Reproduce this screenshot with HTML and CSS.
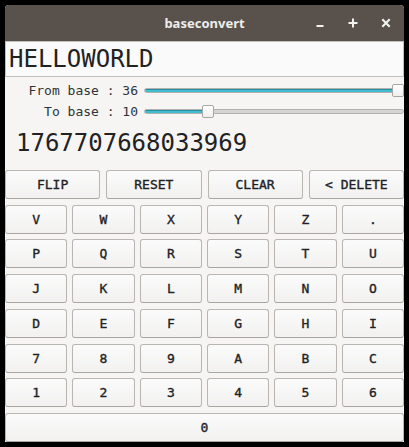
FILE: index.html
```
<!DOCTYPE html>
<html>
<head>
<meta charset="utf-8">
<link rel="stylesheet" href="styles.css">
</head>
<body>
<div class="window">
  <div class="titlebar">
    <div class="tb-side"></div>
    <div class="title">baseconvert</div>
    <div class="tb-side controls">
      <span class="ctl"><svg width="10" height="10" viewBox="0 0 10 10"><rect x="1.5" y="7" width="7" height="2" fill="#f2f2f0"/></svg></span>
      <span class="ctl"><svg width="10" height="10" viewBox="0 0 10 10"><rect x="4" y="0.5" width="2" height="9" fill="#f2f2f0"/><rect x="0.5" y="4" width="9" height="2" fill="#f2f2f0"/></svg></span>
      <span class="ctl"><svg width="10" height="10" viewBox="0 0 10 10"><path d="M1.3 1.3 L8.7 8.7 M8.7 1.3 L1.3 8.7" stroke="#f2f2f0" stroke-width="2.1"/></svg></span>
    </div>
  </div>
  <div class="entry">HELLOWORLD</div>
  <div class="sliders">
    <div class="label">From base : 36</div>
    <div class="slider"><div class="track"><div class="fill" style="width:100%"></div></div><div class="thumb" style="left:calc((100% - 12px) * 1)"></div></div>
    <div class="label">To base : 10</div>
    <div class="slider"><div class="track"><div class="fill" style="width:23.5%"></div></div><div class="thumb" style="left:calc((100% - 12px) * 0.235)"></div></div>
  </div>
  <div class="output">1767707668033969</div>
  <div class="keys">
    <div class="row r4"><button class="key">FLIP</button><button class="key">RESET</button><button class="key">CLEAR</button><button class="key">&lt; DELETE</button></div>
    <div class="row r6"><button class="key">V</button><button class="key">W</button><button class="key">X</button><button class="key">Y</button><button class="key">Z</button><button class="key">.</button></div>
    <div class="row r6"><button class="key">P</button><button class="key">Q</button><button class="key">R</button><button class="key">S</button><button class="key">T</button><button class="key">U</button></div>
    <div class="row r6"><button class="key">J</button><button class="key">K</button><button class="key">L</button><button class="key">M</button><button class="key">N</button><button class="key">O</button></div>
    <div class="row r6"><button class="key">D</button><button class="key">E</button><button class="key">F</button><button class="key">G</button><button class="key">H</button><button class="key">I</button></div>
    <div class="row r6"><button class="key">7</button><button class="key">8</button><button class="key">9</button><button class="key">A</button><button class="key">B</button><button class="key">C</button></div>
    <div class="row r6"><button class="key">1</button><button class="key">2</button><button class="key">3</button><button class="key">4</button><button class="key">5</button><button class="key">6</button></div>
    <div class="row r1"><button class="key">0</button></div>
  </div>
</div>
</body>
</html>
```
FILE: styles.css
```
html, body {
  margin: 0;
  padding: 0;
  background: #000;
  height: 100%;
}
.window {
  margin: 5px 0 0 5px;
  width: 399px;
  height: 437px;
  background: #f6f5f4;
  border-radius: 4px 4px 0 0;
  overflow: hidden;
  display: flex;
  flex-direction: column;
  font-family: "DejaVu Sans Mono", monospace;
  color: #2e3436;
}
.titlebar {
  height: 36px;
  flex: none;
  background: #59524c;
  display: grid;
  grid-template-columns: 1fr auto 1fr;
  align-items: center;
}
.title {
  font-family: "Noto Sans", "DejaVu Sans", sans-serif;
  font-weight: bold;
  font-size: 13px;
  color: #eeeeec;
}
.controls {
  display: flex;
  justify-content: flex-end;
  padding-right: 2px;
}
.ctl {
  width: 33px;
  height: 36px;
  display: flex;
  align-items: center;
  justify-content: center;
}
.ctl svg { display: block; }
.entry {
  height: 36px;
  flex: none;
  box-sizing: border-box;
  border: 1px solid #c3c0bc;
  background: #fafafa;
  font-size: 24px;
  padding-left: 3px;
  display: flex;
  align-items: center;
  color: #222;
}
.sliders {
  display: grid;
  grid-template-columns: 133px 1fr;
  grid-auto-rows: 21px;
  column-gap: 6px;
  padding-top: 3px;
  align-items: center;
}
.label {
  text-align: right;
  font-size: 13px;
  color: #2e3436;
}
.slider {
  position: relative;
  height: 13px;
  display: flex;
  align-items: center;
}
.track {
  width: 100%;
  height: 5px;
  box-sizing: border-box;
  border: 1px solid #b3b1ae;
  border-radius: 3px;
  background: #d6d5d3;
  overflow: hidden;
}
.fill {
  height: 100%;
  background: #41bcd0;
  box-shadow: inset 0 1px 0 #2a8fa0;
}
.thumb {
  position: absolute;
  top: 0;
  width: 12px;
  height: 13px;
  box-sizing: border-box;
  border: 1px solid #a9a7a4;
  border-radius: 2px;
  background: linear-gradient(#ffffff, #f1f0ef);
}
.output {
  height: 42px;
  flex: none;
  display: flex;
  align-items: center;
  padding-left: 11px;
  font-size: 24px;
  color: #222;
}
.keys {
  margin-top: 6px;
  height: 272px;
  display: grid;
  grid-template-rows: repeat(8, 1fr);
  row-gap: 5.7px;
}
.row {
  display: grid;
}
.r4 { grid-template-columns: repeat(4, 1fr); column-gap: 6px; }
.r6 { grid-template-columns: repeat(6, 1fr); column-gap: 5px; }
.r1 { grid-template-columns: 1fr; }
.key {
  margin: 0;
  padding: 0;
  box-sizing: border-box;
  border: 1px solid #b9b6b2;
  border-bottom-color: #a9a6a2;
  border-radius: 3px;
  background: linear-gradient(#fbfbfb, #f2f1f0);
  font-family: "DejaVu Sans Mono", monospace;
  font-size: 13px;
  font-weight: normal;
  -webkit-text-stroke: 0.35px #1e2224;
  color: #1e2224;
}
```
